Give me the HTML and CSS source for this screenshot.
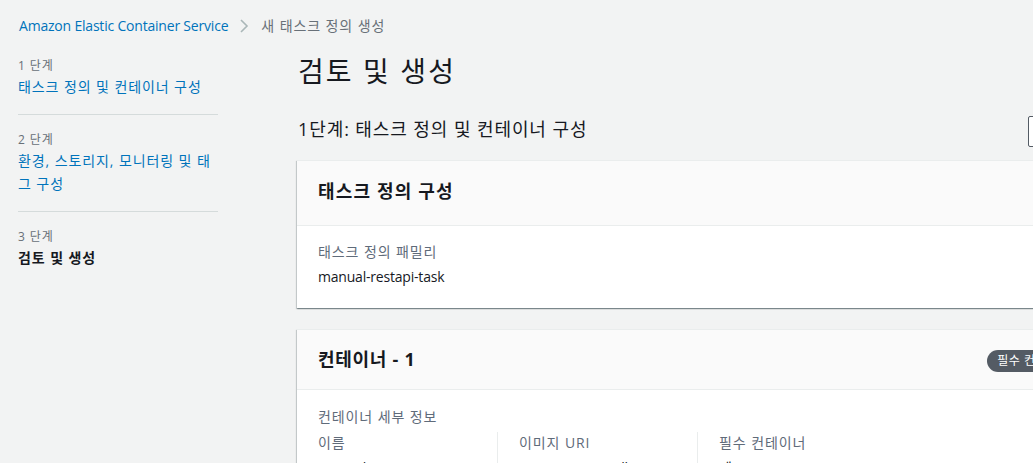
FILE: index.html
```html
<!DOCTYPE html>
<html lang="ko">
<head>
<meta charset="utf-8">
<title>새 태스크 정의 생성</title>
<link rel="stylesheet" href="styles.css">
</head>
<body>
<nav class="breadcrumb">
  <a class="crumb-link latin" href="#">Amazon Elastic Container Service</a>
  <svg class="crumb-sep" width="10" height="16" viewBox="0 0 10 16"><path d="M2 2l6 6-6 6" fill="none" stroke="#aab7b8" stroke-width="1.6"/></svg>
  <span class="crumb-current">새 태스크 정의 생성</span>
</nav>
<div class="layout">
  <aside class="steps">
    <div class="step">
      <div class="step-num">1 단계</div>
      <a class="step-link" href="#">태스크 정의 및 컨테이너 구성</a>
    </div>
    <div class="step">
      <div class="step-num">2 단계</div>
      <a class="step-link" href="#">환경, 스토리지, 모니터링 및 태그 구성</a>
    </div>
    <div class="step last">
      <div class="step-num">3 단계</div>
      <div class="step-current">검토 및 생성</div>
    </div>
  </aside>
  <main class="main">
    <h1 class="page-title">검토 및 생성</h1>
    <div class="section-head">
      <h2 class="section-title">1단계: 태스크 정의 및 컨테이너 구성</h2>
      <button class="btn">편집</button>
    </div>
    <section class="card task-card">
      <header class="card-head">
        <h3 class="card-title">태스크 정의 구성</h3>
      </header>
      <div class="card-body">
        <div class="label">태스크 정의 패밀리</div>
        <div class="value latin">manual-restapi-task</div>
      </div>
    </section>
    <section class="card container-card">
      <header class="card-head">
        <h3 class="card-title">컨테이너 - 1</h3>
        <span class="badge">필수 컨테이너</span>
      </header>
      <div class="card-body">
        <div class="label">컨테이너 세부 정보</div>
        <div class="cols">
          <div class="col">
            <div class="label">이름</div>
            <div class="value latin">manual-restapi</div>
          </div>
          <div class="col">
            <div class="label">이미지 URI</div>
            <div class="value latin">590780300015.dkr.ecr</div>
          </div>
          <div class="col">
            <div class="label">필수 컨테이너</div>
            <div class="value">예</div>
          </div>
        </div>
      </div>
    </section>
  </main>
</div>
</body>
</html>
```
FILE: styles.css
```css
html, body {
  margin: 0;
  padding: 0;
}
body {
  background: #f2f3f3;
  font-family: "Open Sans", "Noto Sans CJK KR", sans-serif;
  font-size: 14px;
  line-height: 22px;
  letter-spacing: 0.065em;
  color: #16191f;
  width: 1033px;
  height: 463px;
  overflow: hidden;
}
a { text-decoration: none; }
.latin { letter-spacing: -0.2px; }

.breadcrumb {
  display: flex;
  align-items: center;
  padding: 15px 0 0 19px;
  height: 22px;
}
.crumb-link { color: #0073bb; }
.crumb-sep { margin: 0 12px 0 11px; }
.crumb-current { color: #687078; }

.layout {
  display: flex;
  padding-top: 16px;
  width: 1200px;
}
.steps {
  width: 200px;
  margin-left: 18px;
  flex: none;
}
.step {
  padding: 16px 0 16px;
  border-bottom: 1px solid #d5dbdb;
}
.step:first-child { padding-top: 4px; }
.step.last { border-bottom: none; }
.step-num {
  font-size: 12px;
  line-height: 17px;
  color: #687078;
}
.step-link {
  display: block;
  margin-top: 1px;
  line-height: 23px;
  color: #0073bb;
  word-break: break-all;
}
.step-current {
  margin-top: 2px;
  line-height: 22px;
  font-weight: 700;
  color: #16191f;
}

.main {
  margin-left: 79px;
  width: 803px;
  flex: none;
}
.page-title {
  margin: 0 0 0 1px;
  font-size: 28px;
  line-height: 36px;
  font-weight: 400;
  letter-spacing: 0.075em;
  color: #16191f;
}
.section-head {
  display: flex;
  align-items: center;
  justify-content: space-between;
  margin-top: 27px;
  height: 31px;
}
.section-title {
  align-self: flex-start;
  margin: 0 0 0 1px;
  font-size: 18px;
  line-height: 26px;
  font-weight: 400;
  color: #16191f;
}
.btn {
  width: 72px;
  height: 31px;
  border: 1px solid #545b64;
  border-radius: 2px;
  background: #fff;
  font-family: inherit;
  font-size: 14px;
  font-weight: 700;
  color: #545b64;
}

.card {
  margin-top: 13px;
  background: #fff;
  border-top: 1px solid #eaeded;
  box-shadow: 0 1px 1px 0 rgba(0, 28, 36, 0.3), 1px 1px 1px 0 rgba(0, 28, 36, 0.15), -1px 1px 1px 0 rgba(0, 28, 36, 0.15);
}
.card + .card { margin-top: 21px; }
.card-head {
  display: flex;
  align-items: center;
  justify-content: space-between;
  height: 64px;
  padding: 0 20px 0 21px;
  background: #fafafa;
  border-bottom: 1px solid #eaeded;
}
.container-card .card-head { height: 59px; }
.card-title {
  margin: 0 0 5px;
  font-size: 18px;
  line-height: 26px;
  font-weight: 700;
  letter-spacing: 0.065em;
  color: #16191f;
}
.container-card .card-title { margin: 0 0 1px; letter-spacing: 0.04em; }
.badge {
  display: inline-block;
  margin-top: 3px;
  height: 22px;
  line-height: 22px;
  padding: 0 10px;
  border-radius: 11px;
  background: #545b64;
  color: #fff;
  font-size: 12px;
  letter-spacing: 0.04em;
}
.card-body {
  padding: 16px 20px 19px 21px;
}
.task-card .card-body { padding: 15px 20px 20px 21px; }
.label {
  color: #5f6b7a;
  line-height: 22px;
}
.value {
  margin-top: 3px;
  color: #16191f;
  line-height: 22px;
}
.cols {
  display: grid;
  grid-template-columns: repeat(4, 200px);
  margin: 4px 0 0 -21px;
}
.col {
  padding-left: 21px;
}
.col + .col {
  border-left: 1px solid #eaeded;
  padding-left: 21px;
}
```
